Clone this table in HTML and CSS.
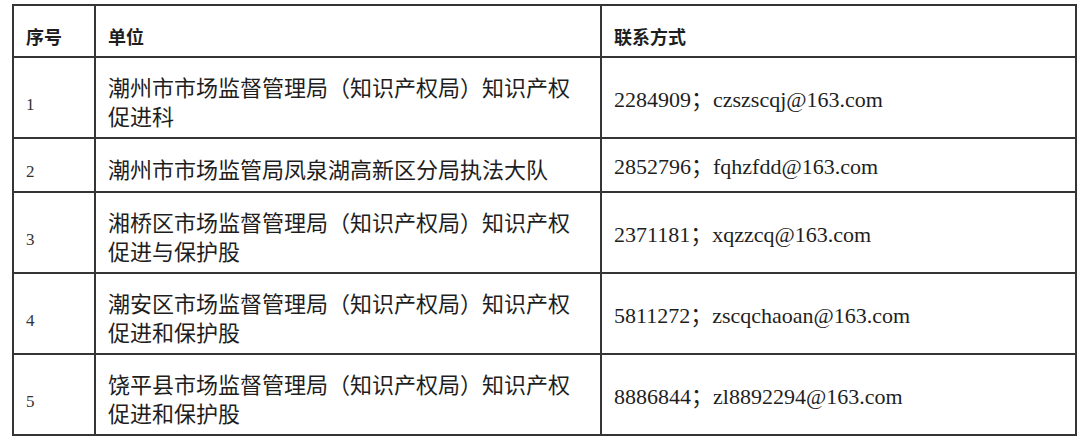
FILE: index.html
```html
<!DOCTYPE html>
<html lang="zh">
<head>
<meta charset="utf-8">
<title>联系方式</title>
<link rel="stylesheet" href="styles.css">
</head>
<body>
<table class="contacts">
  <colgroup>
    <col class="c-no">
    <col class="c-unit">
    <col class="c-contact">
  </colgroup>
  <thead>
    <tr class="head-row">
      <th>序号</th>
      <th>单位</th>
      <th>联系方式</th>
    </tr>
  </thead>
  <tbody>
    <tr class="row-tall">
      <td class="no">1</td>
      <td class="unit">潮州市市场监督管理局（知识产权局）知识产权促进科</td>
      <td class="contact">2284909；czszscqj@163.com</td>
    </tr>
    <tr class="row-short">
      <td class="no">2</td>
      <td class="unit">潮州市市场监管局凤泉湖高新区分局执法大队</td>
      <td class="contact">2852796；fqhzfdd@163.com</td>
    </tr>
    <tr class="row-tall">
      <td class="no">3</td>
      <td class="unit">湘桥区市场监督管理局（知识产权局）知识产权促进与保护股</td>
      <td class="contact">2371181；xqzzcq@163.com</td>
    </tr>
    <tr class="row-tall">
      <td class="no">4</td>
      <td class="unit">潮安区市场监督管理局（知识产权局）知识产权促进和保护股</td>
      <td class="contact">5811272；zscqchaoan@163.com</td>
    </tr>
    <tr class="row-tall">
      <td class="no">5</td>
      <td class="unit">饶平县市场监督管理局（知识产权局）知识产权促进和保护股</td>
      <td class="contact">8886844；zl8892294@163.com</td>
    </tr>
  </tbody>
</table>
</body>
</html>
```

FILE: styles.css
```css
html, body {
  margin: 0;
  padding: 0;
  background: #ffffff;
}

body {
  padding: 4px 0 0 12px;
  font-family: "Noto Sans CJK SC", "Noto Sans", sans-serif;
  color: #1e1e1e;
}

.contacts {
  border-collapse: collapse;
  table-layout: fixed;
  width: 1063px;
}

.contacts th,
.contacts td {
  border: 2px solid #353535;
  padding: 0 14px 0 12px;
  text-align: left;
  vertical-align: middle;
}

.c-no { width: 82px; }
.c-unit { width: 506px; }
.c-contact { width: 475px; }

.head-row { height: 52px; }
.row-tall { height: 81px; }
.row-short { height: 54px; }

.contacts th {
  font-size: 18px;
  font-weight: 700;
  line-height: 24px;
  padding-top: 9px;
}

.contacts .no {
  font-family: "Liberation Serif", serif;
  font-size: 17px;
  line-height: 18px;
  padding-top: 14px;
  color: #333333;
}

.contacts .unit {
  font-size: 22px;
  line-height: 29px;
  padding-top: 7px;
}

.contacts .contact {
  font-family: "Liberation Serif", "Noto Sans CJK SC", serif;
  font-size: 22px;
  line-height: 28px;
  padding-top: 4px;
}
```
